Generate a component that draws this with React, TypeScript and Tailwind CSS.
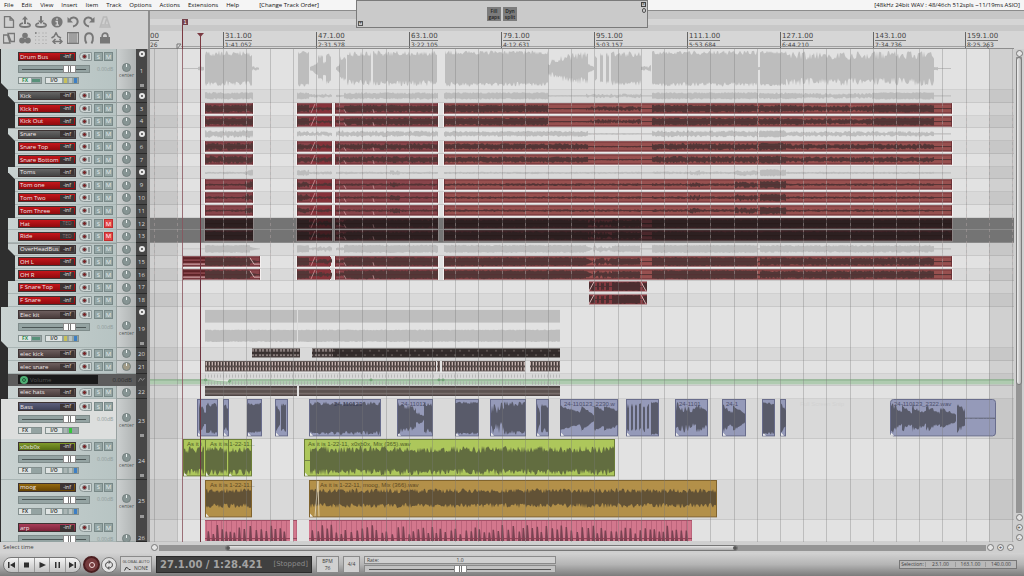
import type { ReactNode } from 'react';
import clsx from 'clsx';

type Seg = [x0: number, x1: number, a0: number, a1?: number, jitter?: number];
type Span = [x0: number, x1: number];

interface Track {
  id: number;
  name: string;
  tone: keyof typeof TONES;
  depth: 0 | 1 | 2;
  folder?: boolean;
  muted?: boolean;
  tall?: boolean;
  cropped?: boolean;
  envelope?: boolean;
  lane: () => ReactNode;
  labels?: { x: number; text: string; className: string }[];
}

// Horizontal extent of the arrange view, in timeline units
const START = 150;
const LENGTH = 864;
const percent = (x: number) => `${((x - START) / LENGTH) * 100}%`;

const TONES = {
  red: 'bg-linear-to-b from-[#c5161b] to-[#8f0a0e]',
  gray: 'bg-linear-to-b from-[#666] to-[#434343]',
  brown: 'bg-linear-to-b from-[#6d5e5e] to-[#493c3c]',
  blue: 'bg-linear-to-b from-[#5c5f7c] to-[#3f4258]',
  green: 'bg-linear-to-b from-[#7f9a2a] to-[#566d14]',
  amber: 'bg-linear-to-b from-[#94690f] to-[#674404]',
  pink: 'bg-linear-to-b from-[#a83c58] to-[#7b2339]',
};

function random(seed: number) {
  let s = seed * 7919 + 17;
  return () => {
    s = (s * 16807) % 2147483647;
    return s / 2147483647;
  };
}

function wave(segs: Seg[], mid: number, scale: number, seed = 1) {
  const rnd = random(seed);
  return segs
    .map(([x0, x1, a0, a1 = a0, jitter = 0.35]) => {
      const top: string[] = [];
      const bottom: string[] = [];
      for (let x = x0; x <= x1; x += 1) {
        const amp = (a0 + ((a1 - a0) * (x - x0)) / (x1 - x0)) * scale;
        const up = Math.max(0.4, amp * (1 - jitter * rnd()));
        const down = Math.max(0.4, amp * (1 - jitter * rnd()));
        top.push(`${x} ${(mid - up).toFixed(1)}`);
        bottom.unshift(`${x} ${(mid + down).toFixed(1)}`);
      }
      return `M${top.join('L')}L${bottom.join('L')}Z`;
    })
    .join('');
}

const DRUM_BUS: Seg[] = [
  [183, 201, 0.02], [198, 204, 0.12], [205, 252, 1], [252, 259, 0.2, 0.1, 0.8], [298, 309, 1, 1, 0.2],
  [310, 318, 0.1, 0.4], [318, 323, 0.8], [323, 326, 0.4], [326, 331, 0.95], [336, 340, 0.05, 0.3],
  [340, 346, 0.7], [347, 371, 0.95], [373, 437, 1], [445, 548, 1, 1, 0.25], [548, 556, 0.4, 0.7, 0.7],
  [556, 588, 0.7, 1, 0.5], [588, 594, 0.3, 0.1], [595, 597, 0.8], [600, 603, 0.9], [606, 609, 0.9],
  [611, 641, 0.95], [641, 651, 0.2, 0.2, 0.95], [652, 757, 1, 1, 0.25], [758, 760, 0.1], [760, 786, 1, 1, 0.2],
  [786, 934, 0.97, 0.97, 0.5], [934, 938, 0.1], [938, 951, 0.02],
];
const KICK: Seg[] = [
  [205, 253, 0.95, 0.95, 0.5], [297, 309, 0.9, 0.9, 0.4], [309, 332, 0.5, 0.5, 0.95], [336, 344, 0.4, 0.4, 0.8],
  [344, 438, 0.9, 0.9, 0.5], [444, 548, 0.9, 0.9, 0.4], [548, 586, 0.15], [586, 641, 0.6, 0.6, 0.95],
  [641, 652, 0.06], [652, 758, 0.9, 0.9, 0.4], [759, 802, 0.85, 0.85, 0.5], [802, 872, 0.75, 0.75, 0.7],
  [872, 934, 0.9, 0.9, 0.3], [934, 951, 0.08],
];
const SNARE: Seg[] = [
  [205, 253, 0.95, 0.95, 0.7], [297, 309, 0.75, 0.75, 0.7], [309, 332, 0.7, 0.7, 0.95], [336, 438, 0.8, 0.8, 0.7],
  [444, 588, 0.75, 0.75, 0.6], [588, 641, 0.2, 0.2, 0.8], [641, 652, 0.06], [652, 758, 0.85, 0.85, 0.65],
  [759, 786, 0.9, 0.9, 0.4], [786, 934, 0.7, 0.7, 0.75], [934, 951, 0.08],
];
const TOM: Seg[] = [
  [205, 245, 0.3, 0.3, 0.9], [245, 253, 0.9, 0.9, 0.8], [297, 309, 0.8, 0.8, 0.8], [309, 332, 0.3, 0.5, 0.9],
  [336, 390, 0.3, 0.3, 0.7], [390, 400, 0.7, 0.7, 0.8], [400, 438, 0.3, 0.3, 0.8], [444, 641, 0.3, 0.3, 0.8],
  [641, 652, 0.06], [652, 690, 0.35, 0.35, 0.8], [690, 700, 0.7, 0.7, 0.9], [700, 735, 0.35, 0.35, 0.8],
  [735, 758, 0.8, 0.8, 0.8], [760, 786, 0.9, 0.9, 0.4], [786, 934, 0.3, 0.3, 0.8], [934, 951, 0.08],
];
const HAT: Seg[] = [
  [205, 253, 0.95, 0.95, 0.2], [297, 309, 0.95, 0.95, 0.2], [309, 332, 0.5, 0.8, 0.9], [336, 346, 0.4, 0.9, 0.7],
  [346, 438, 0.95, 0.95, 0.3], [444, 588, 0.95, 0.95, 0.3], [588, 612, 0.9, 0.9, 0.95], [612, 641, 0.9],
  [641, 652, 0.15], [652, 951, 0.95, 0.95, 0.25],
];
const OVERHEAD: Seg[] = [
  [183, 205, 0.06], [205, 250, 1, 1, 0.25], [250, 260, 0.5, 0.06], [297, 309, 0.9, 0.9, 0.2],
  [309, 332, 0.4, 0.9, 0.9], [336, 344, 0.5, 0.5, 0.7], [344, 438, 1, 1, 0.3], [444, 586, 1, 1, 0.3],
  [586, 592, 0.9, 0.2], [593, 612, 0.9, 0.9, 0.95], [612, 640, 0.85, 0.85, 0.3], [640, 652, 0.08],
  [652, 757, 1, 1, 0.25], [757, 760, 0.2], [760, 934, 0.95, 0.95, 0.4], [934, 951, 0.1],
];

const TAKES: Span[] = [[205, 253], [297, 332], [335, 438], [444, 952]];

function Lane({ height, children }: { height: number; children: ReactNode }) {
  return (
    <svg
      className="absolute inset-0 block h-full w-full"
      viewBox={`${START} 0 ${LENGTH} ${height}`}
      preserveAspectRatio="none"
      aria-hidden="true"
    >
      {children}
    </svg>
  );
}

const busLane = (segs: Seg[], seed: number) => () => (
  <Lane height={13}>
    <path d="M205 6.5H253M297 6.5H332M336 6.5H438M444 6.5H951" stroke="#bdbdbd" strokeWidth="0.8" />
    <path d={wave(segs, 6.5, 4.6, seed)} fill="#bcbcbc" />
  </Lane>
);

const redLane = (segs: Seg[], seed: number, spans: Span[] = TAKES, dark = false) => () => (
  <Lane height={13}>
    {spans.map(([a, b]) => (
      <g key={a}>
        <rect x={a - 1} y="0" width={b - a + 2} height="13" fill={dark ? '#8b8585' : '#f4f0f0'} />
        <rect x={a} y="0.5" width={b - a} height="11" fill={dark ? '#4a272b' : a < 444 ? '#88444a' : '#97504f'} />
        <path
          d={`M${a} 1H${b}M${a} 11H${b}M${a + 0.5} 0.5V11.5M${b - 0.5} 0.5V11.5`}
          stroke={dark ? '#2f1c1f' : '#6e2f35'}
          strokeWidth="1"
        />
      </g>
    ))}
    {spans[1][0] === 297 && <rect x="310" y="1" width="21" height="10" fill={dark ? '#431d21' : '#86323a'} />}
    <path d={wave(segs, 6.2, 5, seed)} fill={dark ? '#2d2021' : '#533737'} />
    {spans.map(([a, b]) => (
      <path key={a} d={`M${a} 6.2H${b}`} stroke={dark ? '#2a1b1c' : '#553133'} strokeWidth="0.8" />
    ))}
    <path
      d="M311 11L313 6L315 1M344 7L346 11M373 7L374 11"
      stroke="#dfaeb0"
      strokeWidth="0.7"
      fill="none"
      opacity={dark ? 0.5 : 1}
    />
  </Lane>
);

const OH_TAKES: Span[] = [[183, 260], [297, 330], [335, 438], [444, 952]];
const overheadLane = (seed: number) => () => (
  <>
    {redLane(OVERHEAD, seed, OH_TAKES)()}
    <Lane height={13}>
      <path d="M183 2.5H205M183 6.5H205" stroke="#5e2327" strokeWidth="2" />
      <path d="M183 9H205M250 2L254 9H260" stroke="#ead0d0" strokeWidth="0.8" fill="none" />
    </Lane>
  </>
);

const FILL_HITS: Seg[] = [
  [589, 595, 0.9], [597, 599, 0.9], [601, 604, 0.9], [606, 609, 0.9], [612, 640, 0.95, 0.95, 0.2], [643, 647, 0.9],
];
const fillSnareLane = (seed: number) => () => (
  <Lane height={13}>
    <rect x="589" y="0.5" width="58" height="11" fill="#853a40" />
    <path d={wave(FILL_HITS, 6, 5.4, seed)} fill="#4c2e30" />
    <path d="M589 6H647" stroke="#4c2e30" />
    <path d="M589 11L594 1M641 1L646 11" stroke="#efc9ca" strokeWidth="0.9" />
  </Lane>
);

const bar = (spans: Span[], y: number, h: number, fill: string) =>
  spans.map(([a, b]) => <rect key={a} x={a} y={y} width={b - a} height={h} fill={fill} />);

const SNARE_HITS: Span[] = [[205, 436], [437, 440], [442, 525], [530, 560]];

interface AudioColors {
  fill: string;
  edge: string;
  ink: string;
}
const BLUE: AudioColors = { fill: '#959ab9', edge: '#686c8c', ink: '#595b6a' };
const LIME: AudioColors = { fill: '#adc75b', edge: '#6c7d38', ink: '#626d40' };
const GOLD: AudioColors = { fill: '#b39049', edge: '#80632d', ink: '#625236' };

function tallLane(spans: Span[], segs: Seg[], colors: AudioColors, mid: number, scale: number) {
  return () => (
    <Lane height={40}>
      {spans.map(([a, b]) => (
        <g key={a}>
          <rect x={a + 0.5} y="0.5" width={b - a - 1} height="37" rx={b > 990 ? 3 : 0} fill={colors.fill} stroke={colors.edge} />
          <path d={`M${a + 1} 34V37.5H${a + 4}Z`} fill="#eee" />
        </g>
      ))}
      <path d={wave(segs, mid, scale, spans.length + 3)} fill={colors.ink} />
    </Lane>
  );
}

const BASS_CLIPS: Span[] = [
  [197, 218], [223, 229], [247, 262], [275, 288], [309, 381], [397, 433], [455, 479], [490, 526],
  [536, 549], [560, 618], [626, 659], [675, 708], [722, 746], [762, 775], [780, 786], [890, 996],
];
const BASS_WAVE: Seg[] = [
  [199, 204, 1, 0.6], [204, 206, 0.4], [206, 217, 0.95], [224, 228, 0.9, 0.8, 0.4], [247, 261, 0.95, 0.95, 0.2], [276, 280, 0.9, 0.5],
  [281, 286, 0.9], [310, 380, 1, 1, 0.25], [398, 416, 1, 0.7, 0.4], [416, 424, 0.5, 0.2, 0.6], [424, 432, 0.95],
  [455, 478, 1, 1, 0.15], [491, 504, 1, 1, 0.8], [504, 525, 1, 1, 0.3], [537, 540, 1, 0.4], [541, 548, 0.9],
  [560, 580, 0.8, 0.4, 0.2], [580, 582, 0.4, 0.9], [582, 594, 0.8, 0.2, 0.2], [594, 604, 0.8, 0.5, 0.2],
  [604, 618, 0.8, 0.5, 0.2], [627, 629, 0.9], [631, 633, 0.9], [635, 637, 0.9], [639, 641, 0.9], [643, 645, 0.9],
  [647, 649, 0.9], [651, 658, 1, 1, 0.1], [676, 696, 1, 0.7, 0.6], [696, 707, 0.95, 0.6, 0.4], [723, 733, 0.9, 0.5, 0.5],
  [733, 745, 0.8, 0.3, 0.2], [763, 774, 1, 1, 0.2], [781, 786, 0.9, 0.5, 0.2], [891, 902, 1, 0.5, 0.4],
  [902, 912, 0.9, 0.4, 0.4], [912, 926, 1, 0.5, 0.5], [926, 940, 0.9, 0.4, 0.4], [940, 956, 0.7, 0.25, 0.3],
  [957, 965, 0.9, 0.6, 0.4], [965, 995, 0.03],
];

// Teeth standing on the lower edge of the arp clips
function teeth([a, b]: Span, seed: number) {
  const rnd = random(seed);
  let d = '';
  for (let x = a + 2; x < b - 3; x += 4 + Math.round(rnd() * 2)) {
    const h = 5 + rnd() * 10;
    d += `M${x} 22L${x + 0.6} ${(20 - h).toFixed(1)}L${x + 2} ${(20 - h).toFixed(1)}L${x + 3.2} 22Z`;
  }
  return d;
}
const ARP_CLIPS: Span[] = [[205, 290], [293, 297], [309, 692]];

const GROUPS: { className: string; tracks: Track[] }[] = [
  {
    className: 'h-[41px]',
    tracks: [
      {
        id: 1, name: 'Drum Bus', tone: 'red', depth: 0, folder: true, tall: true,
        lane: () => (
          <Lane height={41}>
            <path d={wave(DRUM_BUS, 20, 18.5, 4)} fill="#bdbdbd" />
          </Lane>
        ),
      },
    ],
  },
  {
    className: 'h-[217px]',
    tracks: [
      { id: 2, name: 'Kick', tone: 'gray', depth: 1, folder: true, lane: busLane(KICK, 2) },
      { id: 3, name: 'KIck in', tone: 'red', depth: 2, lane: redLane(KICK, 3) },
      { id: 4, name: 'Kick Out', tone: 'red', depth: 2, lane: redLane(KICK, 4) },
      { id: 5, name: 'Snare', tone: 'gray', depth: 1, folder: true, lane: busLane(SNARE, 5) },
      { id: 6, name: 'Snare Top', tone: 'red', depth: 2, lane: redLane(SNARE, 6) },
      { id: 7, name: 'Snare Bottom', tone: 'red', depth: 2, lane: redLane(SNARE, 7) },
      { id: 8, name: 'Toms', tone: 'gray', depth: 1, folder: true, lane: busLane(TOM, 8) },
      { id: 9, name: 'Tom one', tone: 'red', depth: 2, lane: redLane(TOM, 9) },
      { id: 10, name: 'Tom Two', tone: 'red', depth: 2, lane: redLane(TOM, 10) },
      { id: 11, name: 'Tom Three', tone: 'red', depth: 2, lane: redLane(TOM, 11) },
      { id: 12, name: 'Hat', tone: 'red', depth: 1, muted: true, lane: redLane(HAT, 12, TAKES, true) },
      { id: 13, name: 'Ride', tone: 'red', depth: 1, muted: true, lane: redLane(HAT, 13, TAKES, true) },
      { id: 14, name: 'OverHeadBus', tone: 'gray', depth: 1, folder: true, lane: busLane(OVERHEAD, 14) },
      { id: 15, name: 'OH L', tone: 'red', depth: 2, lane: overheadLane(15) },
      { id: 16, name: 'OH R', tone: 'red', depth: 2, lane: overheadLane(16) },
      { id: 17, name: 'F Snare Top', tone: 'red', depth: 1, lane: fillSnareLane(17) },
      { id: 18, name: 'F Snare', tone: 'red', depth: 1, lane: fillSnareLane(18) },
    ],
  },
  {
    className: 'h-[41px]',
    tracks: [
      {
        id: 19, name: 'Elec kit', tone: 'brown', depth: 0, folder: true, tall: true,
        lane: () => (
          <Lane height={41}>
            <rect x="205" y="3" width="355" height="13" fill="#bebebe" />
            <path d={wave([[205, 297, 1, 1, 0.15], [298, 560, 1, 1, 0.15]], 29.5, 6.5, 3)} fill="#bebebe" />
            <path d="M297.5 2V37" stroke="#dcdcdc" />
          </Lane>
        ),
      },
    ],
  },
  {
    className: 'h-[51px]',
    tracks: [
      {
        id: 20, name: 'elec kick', tone: 'brown', depth: 1,
        lane: () => (
          <Lane height={13}>
            <defs>
              <pattern id="kick-hits" width="7" height="10" patternUnits="userSpaceOnUse">
                <rect width="7" height="10" fill="#453c3b" />
                <path d="M1 1V4M1 7V9M4 1V4M4 7V9" stroke="#cdbfbd" />
              </pattern>
              <pattern id="kick-dense" width="9" height="10" patternUnits="userSpaceOnUse">
                <rect width="9" height="10" fill="#342d2c" />
                <path d="M1 2V4M5 7V9" stroke="#7b706e" />
              </pattern>
            </defs>
            {bar([[252, 300], [312, 333]], 0.5, 10, 'url(#kick-hits)')}
            {bar([[333, 560]], 0.5, 10, 'url(#kick-dense)')}
            <path d="M252 5.5H300M312 5.5H560" stroke="#2e2726" />
          </Lane>
        ),
      },
      {
        id: 21, name: 'elec snare', tone: 'brown', depth: 1,
        lane: () => (
          <Lane height={13}>
            <defs>
              <pattern id="snare-hits" width="3" height="13" patternUnits="userSpaceOnUse">
                <rect width="3" height="13" fill="#c3b1ae" />
                <rect width="1.6" height="13" fill="#453b3a" />
              </pattern>
            </defs>
            {bar(SNARE_HITS, 0.5, 10.5, 'url(#snare-hits)')}
            {bar(SNARE_HITS, 5, 2, '#5a4e4c')}
            {bar(SNARE_HITS, 0, 1, '#5d5150')}
            {bar(SNARE_HITS, 10.5, 1, '#5d5150')}
          </Lane>
        ),
      },
      {
        id: 0, name: 'Volume', tone: 'gray', depth: 1, envelope: true,
        lane: () => (
          <Lane height={13}>
            <defs>
              <pattern id="ghost-hits" width="3" height="13" patternUnits="userSpaceOnUse">
                <rect x="1" y="0" width="1" height="4" fill="#b9b9b9" />
                <rect x="1" y="8" width="1" height="4" fill="#a9b4a9" />
              </pattern>
            </defs>
            <rect x="150" y="6.5" width="864" height="5" fill="#afcbb0" />
            {bar(SNARE_HITS, 0.5, 12, 'url(#ghost-hits)')}
            <path d="M150 6.5H205L229 8.5V6.5H1014" stroke="#7aa57c" strokeWidth="1" fill="none" />
            <path d="M207 7L228 8.5L230 6.5Z" fill="#e6ece4" />
            <g fill="#7fb083" stroke="#5b8a60" strokeWidth="0.5">
              <circle cx="205.5" cy="6.5" r="1.2" />
              <circle cx="229.5" cy="8" r="1.2" />
              <circle cx="371" cy="6.5" r="1.2" />
              <circle cx="439" cy="6.5" r="1.2" />
              <circle cx="443" cy="6.5" r="1.2" />
            </g>
          </Lane>
        ),
      },
      {
        id: 22, name: 'elec hats', tone: 'brown', depth: 1,
        lane: () => (
          <Lane height={13}>
            {bar([[205, 297], [299, 560]], 0.5, 10.5, '#786d6b')}
            {bar([[205, 297], [299, 560]], 0, 2, '#4b4241')}
            {bar([[205, 297], [299, 560]], 4.5, 3, '#5c5250')}
            {bar([[205, 297], [299, 560]], 9.5, 1.5, '#4b4241')}
          </Lane>
        ),
      },
    ],
  },
  {
    className: 'h-[121px]',
    tracks: [
      {
        id: 23, name: 'Bass', tone: 'blue', depth: 0, tall: true,
        lane: tallLane(BASS_CLIPS, BASS_WAVE, BLUE, 19.5, 17),
        labels: [
          { x: 334, text: '24-110123', className: 'text-[#3b3e57]' },
          { x: 401, text: '24-11012', className: 'text-[#4c4f6b]' },
          { x: 564, text: '24-110123_2230.w', className: 'text-[#4c4f6b]' },
          { x: 679, text: '24-1101', className: 'text-[#4c4f6b]' },
          { x: 726, text: '24-1', className: 'text-[#4c4f6b]' },
          { x: 800, text: 'Full Screen Snip', className: 'text-[#d2d2d2]' },
          { x: 894, text: '24-110123_2322.wav', className: 'text-[#4c4f6b]' },
        ],
      },
      {
        id: 24, name: 'x0xb0x', tone: 'green', depth: 0, tall: true,
        lane: tallLane(
          [[183, 206], [205, 229], [228, 252], [304, 615]],
          [[184, 204, 1, 1, 0.5], [206, 227, 1, 1, 0.5], [229, 251, 1, 1, 0.5], [305, 310, 0.03], [310, 614, 1, 1, 0.48]],
          LIME, 22, 15,
        ),
        labels: [
          { x: 187, text: 'As it i', className: 'text-[#4f5d27]' },
          { x: 210, text: 'As it is 1-22-11...', className: 'text-[#4f5d27]' },
          { x: 308, text: 'As it is 1-22-11, x0xb0x, Mix (365).wav', className: 'text-[#4f5d27]' },
        ],
      },
      {
        id: 25, name: 'moog', tone: 'amber', depth: 0, tall: true,
        lane: () => (
          <>
            {tallLane([[205, 252], [309, 717]], [[206, 251, 1, 1, 0.5], [310, 716, 1, 1, 0.5]], GOLD, 18.5, 10)()}
            <Lane height={40}>
              <path d="M315 37L318 1L319 37" stroke="#e8dcc0" strokeWidth="0.8" fill="none" />
            </Lane>
          </>
        ),
        labels: [
          { x: 210, text: 'As it is 1-22-11...', className: 'text-[#5d4823]' },
          { x: 320, text: 'As it is 1-22-11, moog, Mix (366).wav', className: 'text-[#5d4823]' },
        ],
      },
    ],
  },
  {
    className: 'h-[22px] grow',
    tracks: [
      {
        id: 26, name: 'arp', tone: 'pink', depth: 0, tall: true, cropped: true,
        lane: () => (
          <Lane height={22}>
            <defs>
              <pattern id="arp-notes" width="5" height="22" patternUnits="userSpaceOnUse">
                <rect width="5" height="22" fill="#d3778d" />
                <rect x="1" width="1" height="22" fill="#bb647b" />
              </pattern>
            </defs>
            {bar(ARP_CLIPS, 0.5, 21.5, 'url(#arp-notes)')}
            {bar(ARP_CLIPS, 0, 1, '#a34c63')}
            {ARP_CLIPS.map((clip, i) => (
              <path key={i} d={teeth(clip, i + 5)} fill="#784352" />
            ))}
            {bar(ARP_CLIPS, 19, 1, '#8c4054')}
          </Lane>
        ),
      },
    ],
  },
];

const MENU = ['File', 'Edit', 'View', 'Insert', 'Item', 'Track', 'Options', 'Actions', 'Extensions', 'Help'];

const TRAY = 'M4 7.2C1.500 7.500 0.800 8.500 1 9.500C1.500 11.500 10.500 11.500 11 9.500C11.200 8.500 10.500 7.500 8 7.200';

const TOOLS: { label: string; faint?: boolean; art: ReactNode }[] = [
  { label: 'New project', art: <path d="M1.5 0.700H7L10.500 4.200V11.300H1.500ZM7 0.700V4.200H10.500" fill="none" /> },
  {
    label: 'Open project',
    art: (
      <>
        <path d={TRAY} fill="none" strokeWidth="1.800" />
        <path d="M6 0L9 3.500H7V8H5V3.500H3Z" stroke="none" />
      </>
    ),
  },
  {
    label: 'Save project',
    art: (
      <>
        <path d={TRAY} fill="none" strokeWidth="1.800" />
        <path d="M6 8L9 4.500H7V0H5V4.500H3Z" stroke="none" />
      </>
    ),
  },
  {
    label: 'Project settings',
    art: (
      <>
        <circle cx="6" cy="6" r="5.6" stroke="none" />
        <path d="M6 2.200V4M4.500 5.500H6.300V9.200M4.500 9.200H8" stroke="#d4d4d4" fill="none" />
      </>
    ),
  },
  {
    label: 'Undo',
    art: (
      <>
        <path d="M2.500 4C4.500 1 8 0.800 9.800 3C11.800 5.800 10 10 6 10.500" fill="none" strokeWidth="2" />
        <path d="M0.500 1V6.500H6Z" stroke="none" />
      </>
    ),
  },
  {
    label: 'Redo',
    art: (
      <>
        <path d="M9.500 4C7.500 1 4 0.800 2.200 3C0.200 5.800 2 10 6 10.500" fill="none" strokeWidth="2" />
        <path d="M11.500 1V6.500H6Z" stroke="none" />
      </>
    ),
  },
  { label: 'Metronome', faint: true, art: <path d="M4.500 1H7.500L10.800 11H1.200ZM2 9H10M6 8L7.500 3" fill="none" strokeWidth="1.500" /> },
  { label: 'Auto crossfade', art: <path d="M0.500 3H4.500L7 11H0.500ZM5 1.500H11.500V9.500H8Z" fill="none" /> },
  {
    label: 'Item grouping',
    art: (
      <g stroke="none">
        <circle cx="6" cy="3.5" r="2.8" />
        <circle cx="3.2" cy="8.4" r="3" />
        <circle cx="8.8" cy="8.4" r="3" />
      </g>
    ),
  },
  {
    label: 'Ripple editing',
    art: (
      <>
        <path d="M4 0.500V1.500M8 0.500V1.500M11 0.500V1.500M0.500 4V5M4 4V5M8 4V5M11 4V5M0.500 7.500V8.500M4 7.500V8.500M8 7.500V8.500M11 7.500V8.500M0.500 11V12M4 11V12M8 11V12M11 11V12" stroke="#aaa" />
        <circle cx="0.8" cy="1" r="0.9" stroke="none" />
      </>
    ),
  },
  {
    label: 'Move envelopes with items',
    art: <path d="M0.500 6L3 4.500L5 0.800L7 4.500L10 6M2 9.500H10.500M4.500 7L2 9.500L4.500 12M8.500 7L11 9.500L8.500 12" fill="none" strokeWidth="1.500" />,
  },
  { label: 'Grid lines', art: <path d="M0.600 0.600H11.400V11.400H0.600ZM3 1V11M5 1V11M7 1V11M9 1V11" fill="none" strokeWidth="1.100" /> },
  { label: 'Snapping', art: <path d="M3.500 11.500C1.500 8 1 1.200 6 1.200C11 1.200 10.500 8 8.500 11.500" fill="none" strokeWidth="1.900" /> },
  {
    label: 'Locking',
    art: (
      <>
        <rect x="1" y="5" width="10" height="6.5" stroke="none" />
        <path d="M3.200 5.500V4C3.200 0.200 8.800 0.200 8.800 4V5.500" fill="none" strokeWidth="1.700" />
      </>
    ),
  },
];

const RULER = [
  { x: 223, bar: '31.1.00', time: '1:41.052' },
  { x: 316, bar: '47.1.00', time: '2:31.578' },
  { x: 409, bar: '63.1.00', time: '3:22.105' },
  { x: 501, bar: '79.1.00', time: '4:12.631' },
  { x: 594, bar: '95.1.00', time: '5:03.157' },
  { x: 687, bar: '111.1.00', time: '5:53.684' },
  { x: 780, bar: '127.1.00', time: '6:44.210' },
  { x: 873, bar: '143.1.00', time: '7:34.736' },
  { x: 965, bar: '159.1.00', time: '8:25.263' },
];

const GRID = Array.from({ length: 38 }, (_, i) => Math.round(153.5 + i * 23.2));

function Knob({ warm }: { warm?: boolean }) {
  return (
    <span
      className={clsx(
        'flex h-[9px] w-[9px] shrink-0 justify-center rounded-full border border-[#74807f]',
        warm ? 'bg-[#a09a86]' : 'bg-[#869493]',
      )}
    >
      <span className="h-[3px] w-px bg-[#e9eeee]" />
    </span>
  );
}

const faderThumb =
  '[&::-webkit-slider-thumb]:h-[8px] [&::-webkit-slider-thumb]:w-[13px] [&::-webkit-slider-thumb]:appearance-none [&::-webkit-slider-thumb]:border [&::-webkit-slider-thumb]:border-[#8a8a8a] [&::-webkit-slider-thumb]:bg-[linear-gradient(90deg,#fff_4px,#777_4px,#777_5px,#fff_5px,#fff_6px,#777_6px,#777_7px,#fff_7px)]';

function TrackControls({ track }: { track: Track }) {
  return (
    <div className="flex items-center">
      <div className={clsx('flex h-[9px] w-[58px] items-center border border-[#3d3333] pr-px', TONES[track.tone])}>
        <input
          aria-label={`Name of track ${track.id}`}
          defaultValue={track.name}
          className="h-[7px] w-0 min-w-0 grow bg-transparent pl-px text-[6px] leading-none text-[#f1e9e9] outline-none"
        />
        <span
          className={clsx(
            'flex h-[6px] w-[14px] shrink-0 items-center justify-center bg-[#3c3434] text-[5px] leading-none',
            track.muted ? 'text-[#8b7777]' : 'text-[#eee]',
          )}
        >
          {track.muted ? 'TED' : '-inf'}
        </span>
      </div>
      <button
        aria-label={`Arm ${track.name} for recording`}
        className="ml-[3px] flex h-[9px] w-[13px] items-center rounded-l-full border border-[#8b9797] bg-[#cdd4d3] pl-[2px]"
      >
        <span className="h-[5px] w-[5px] rounded-full border border-[#8a9190] bg-[#7a2326]" />
        <span className="ml-px h-[5px] w-[2px] bg-[#8e9a9a]" />
      </button>
      <button
        aria-label={`Solo ${track.name}`}
        className="ml-[2px] flex h-[9px] w-[9px] items-center justify-center border border-[#788887] bg-[#94a5a4] text-[6px] leading-none text-[#e3eaea]"
      >
        S
      </button>
      <button
        aria-label={`Mute ${track.name}`}
        className={clsx(
          'ml-px flex h-[9px] w-[9px] items-center justify-center border text-[6px] leading-none',
          track.muted ? 'border-[#c22b2b] bg-[#e2474a] text-white' : 'border-[#788887] bg-[#94a5a4] text-[#e3eaea]',
        )}
      >
        M
      </button>
    </div>
  );
}

function TrackHead({ track }: { track: Track }) {
  const { depth, folder, tall, cropped, id, name } = track;
  const plain = id === 23;

  if (track.envelope) {
    return (
      <div className="flex min-h-0 bg-[#2e2e2e]">
        <div className="ml-2 flex grow items-center bg-[#5c5c5c] pl-[10px]">
          <span className="flex h-[9px] w-20 items-center gap-[2px] bg-[#1a1a1a] pl-[2px] text-[6px] leading-none text-[#565656]">
            <button aria-label="Toggle envelope" className="flex h-2 w-2 items-center justify-center rounded-full bg-[#4fae74]">
              <span className="h-1 w-1 rounded-full border border-[#1f5d38]" />
            </button>
            {name}
          </span>
          <span className="ml-auto pr-1 text-[6px] leading-none text-[#2f2f2f]">0.00dB</span>
        </div>
        <span className="flex w-[11px] shrink-0 items-center justify-center bg-[#444]">
          <svg className="h-[5px] w-[7px]" viewBox="0 0 7 5" fill="none" stroke="#888" aria-hidden="true">
            <path d="M0.500 4.500L2.500 1L4.500 3.500L6.500 1" />
          </svg>
        </span>
      </div>
    );
  }

  return (
    <div className={clsx('flex min-h-0 overflow-hidden bg-[#2e2e2e]', tall && !cropped && 'h-[41px]')}>
      <div
        className={clsx(
          'grow border-b border-[#a9b5b4]',
          depth === 0 && 'ml-px pl-[17px]',
          depth === 1 && 'ml-2 pl-[10px]',
          depth === 2 && 'ml-[15px] pl-[3px]',
          folder && '[clip-path:polygon(0_0,100%_0,100%_100%,7px_100%,0_calc(100%-7px))]',
          plain ? 'bg-[#dcdedd]' : 'bg-linear-to-r from-[#c9d2d1] to-[#b7c4c3]',
          tall ? 'flex flex-col gap-[4px] pt-[3px]' : 'flex items-center',
        )}
      >
        <TrackControls track={track} />
        {tall && (
          <div className={clsx('flex items-center', cropped && 'h-[6px]')}>
            <input
              type="range"
              aria-label={`${name} volume`}
              defaultValue={76}
              className={clsx(
                'h-[8px] w-[72px] appearance-none bg-[#94a3a2] bg-[linear-gradient(#4c5656,#4c5656)] bg-[length:64px_1px] bg-center bg-no-repeat ring-1 ring-[#7e8b8a] ring-inset',
                faderThumb,
              )}
            />
            <span className="ml-[7px] text-[5px] leading-none text-[#8f9b9a]">0.00dB</span>
          </div>
        )}
        {tall && !cropped && (
          <div className="flex h-[7px] items-center gap-[3px] text-[5px] leading-none font-bold text-[#444]">
            <span className="flex h-full w-[24px] border border-[#84908f] bg-[#94a3a2]">
              <button className={clsx('w-3 bg-[#dfe4e3]', folder && 'text-[#2c8a4a]')}>FX</button>
              {folder && <span className="m-px grow bg-[#58917a]" />}
            </span>
            <span className="flex h-full w-[34px] border border-[#84908f] bg-[#94a3a2]">
              <button className="w-4 bg-[#dfe4e3]">I/O</button>
              <span className={clsx('ml-[2px] w-[3px]', folder ? 'bg-[#c8c05a]' : 'bg-[#aab5b4]')} />
              <span className={clsx('ml-[2px] w-[3px]', plain ? 'bg-[#35c63c]' : 'bg-[#b9c2c1]')} />
              <span className={clsx('ml-[2px] w-[3px]', plain ? 'bg-[#94a3a2]' : 'bg-[#3c7ec4]')} />
            </span>
          </div>
        )}
      </div>
      <div
        className={clsx(
          'flex w-5 shrink-0 flex-col items-center border-b border-l border-[#98a1a0] bg-linear-to-r from-[#cbcfcf] to-[#aeb2b2]',
          tall ? 'pt-[14px]' : 'justify-center',
        )}
      >
        <Knob warm={id === 21} />
        {tall && !cropped && <span className="text-[5px] leading-[7px] text-[#4f5656]">center</span>}
      </div>
      <div
        className={clsx(
          'flex w-[11px] shrink-0 flex-col items-center border-b border-[#2a2a2a] bg-[#474747] text-[6px] leading-none text-[#dcdcdc]',
          cropped ? 'justify-end' : tall ? 'justify-between py-[2px]' : 'justify-center',
        )}
      >
        {folder && <span className="h-[6px] w-[6px] rounded-full border-2 border-[#e9e9e9] bg-[#474747]" />}
        {tall && !folder && !cropped && <span className="h-[6px]" />}
        {(tall || !folder) && <span>{id}</span>}
        {tall && !cropped && <span className="h-[3px] w-1 bg-[#9a9a9a]" />}
      </div>
    </div>
  );
}

function Toolbar() {
  return (
    <div className="grid h-[38px] grid-cols-[repeat(7,16px)] content-center gap-y-1 bg-[#d0d0d0] pl-px" role="toolbar" aria-label="Main toolbar">
      {TOOLS.map(({ label, faint, art }) => (
        <button key={label} aria-label={label} className={clsx('flex justify-center', faint && 'opacity-25')}>
          <svg className="h-3 w-3" viewBox="0 0 12 12" fill="#777" stroke="#777" strokeWidth="1.3">
            {art}
          </svg>
        </button>
      ))}
    </div>
  );
}

function Ruler() {
  return (
    <div className="relative h-[38px] overflow-hidden bg-[linear-gradient(#c6c6c6_8px,#d5d5d5_8px,#d5d5d5_14px,#c8c8c8_14px,#c8c8c8_20px,#d6d6d6_20px)] font-['DejaVu_Sans',sans-serif] text-[#444]">
      <div className="absolute inset-y-0 left-0 w-[calc(100%-10px)]">
        <div className="absolute top-[21px] left-0 text-[7px] leading-[8px]">
          <span className="block border-b border-[#777]">00</span>
          <span className="block text-[6px] leading-[7px]">26</span>
        </div>
        {RULER.map(({ x, bar: measure, time }) => (
          <div
            key={x}
            style={{ left: percent(x) }}
            className="absolute top-[21px] h-[17px] border-l border-[#666] pl-px text-[7px] leading-[8px] whitespace-nowrap"
          >
            <span className="block border-b border-[#777]">{measure}</span>
            <span className="block text-[6px] leading-[7px]">{time}</span>
          </div>
        ))}
        <svg className="absolute inset-0 h-full w-full" viewBox={`${START} 0 ${LENGTH} 38`} preserveAspectRatio="none" aria-hidden="true">
          <path d="M150 37.5H1014" stroke="#8d8d8d" />
          <path d="M177 38V33H181ZM989 38L985 33" stroke="#777" fill="#ddd" />
          <path d="M181 35.5H987" stroke="#8a8a8a" strokeWidth="0.7" />
          <path d="M182.5 11V38M200.5 24V38" stroke="#7b3a42" />
          <path d="M197 22H204L200.5 26Z" fill="#7b3a42" />
        </svg>
        <span style={{ left: percent(182) }} className="absolute top-2 flex h-[6px] w-[6px] items-center justify-center bg-[#74404a] text-[5px] leading-none text-white">
          1
        </span>
      </div>
    </div>
  );
}

function Timeline() {
  let row = 0;
  return (
    <div className="relative flex min-w-0 grow flex-col overflow-hidden bg-[#d0d0d0]">
      <div style={{ left: percent(177), width: `${(812 / LENGTH) * 100}%` }} className="absolute inset-y-0 bg-[#e2e2e2]" />
      {GROUPS.map((group, i) => (
        <div key={i} className={clsx('grid auto-rows-fr', group.className)}>
          {group.tracks.map((track) => {
            row += 1;
            return (
              <div
                key={track.id}
                className={clsx(
                  'relative min-h-0 border-b',
                  track.muted ? 'border-[#8a8a8a] bg-[#747474]' : 'border-black/8',
                  !track.muted && row % 2 === 0 && 'bg-black/4',
                )}
              >
                {track.lane()}
                {track.labels?.map(({ x, text, className }) => (
                  <span
                    key={x}
                    style={{ left: percent(x) }}
                    className={clsx(
                      "absolute top-px font-['Liberation_Sans',sans-serif] text-[6px] leading-[8px] whitespace-nowrap",
                      className,
                    )}
                  >
                    {text}
                  </span>
                ))}
              </div>
            );
          })}
        </div>
      ))}
      <svg
        className="pointer-events-none absolute inset-0 h-full w-full"
        viewBox={`${START} 0 ${LENGTH} 493`}
        preserveAspectRatio="none"
        aria-hidden="true"
      >
        <path d={GRID.map((x) => `M${x + 0.5} 0V493`).join('')} stroke="#777" strokeOpacity="0.35" />
        <path d={GRID.map((x) => `M${x + 0.5} 54V226`).join('')} stroke="#e9cfcf" strokeOpacity="0.25" strokeDasharray="3 3" />
        <path d="M182.5 0V493" stroke="#8a545c" strokeOpacity="0.8" />
        <path d="M200.5 0V493" stroke="#6e3540" />
      </svg>
    </div>
  );
}

function RoundButton({ label, children }: { label: string; children?: ReactNode }) {
  return (
    <button
      aria-label={label}
      className="flex h-[7px] w-[7px] shrink-0 items-center justify-center rounded-full border border-[#777] bg-[#e4e4e4] text-[6px] leading-none text-[#333]"
    >
      {children}
    </button>
  );
}

function VerticalScroll() {
  return (
    <div className="flex w-[10px] shrink-0 flex-col items-center bg-[#cfcfcf] pt-px pb-px">
      <RoundButton label="Scroll up" />
      <div className="flex w-[6px] grow flex-col bg-[#959595]">
        <div className="h-[72%] rounded-sm border border-[#7d7d7d] bg-linear-to-r from-[#efefef] to-[#b5b5b5]" />
      </div>
      <div className="flex flex-col gap-[3px] pt-px">
        <RoundButton label="Scroll down" />
        <RoundButton label="Zoom in vertically">+</RoundButton>
        <RoundButton label="Zoom out vertically">-</RoundButton>
      </div>
    </div>
  );
}

function HorizontalScroll() {
  return (
    <div className="flex h-[11px] grow items-center gap-px bg-[#cfcfcf] pr-[10px] pl-px">
      <RoundButton label="Scroll left" />
      <div className="flex h-[6px] grow bg-[#959595]">
        <div className="ml-[8%] flex w-[62%] items-center justify-between rounded-full border border-[#777] bg-linear-to-b from-[#e6e6e6] to-[#acacac]">
          <span className="h-1 w-1 rounded-full bg-[#555]" />
          <span className="h-1 w-1 rounded-full bg-[#555]" />
        </div>
      </div>
      <div className="flex gap-[3px]">
        <RoundButton label="Scroll right" />
        <RoundButton label="Zoom in">+</RoundButton>
        <RoundButton label="Zoom out">-</RoundButton>
      </div>
    </div>
  );
}

const TRANSPORT = [
  { label: 'Go to start', d: 'M2 2V8H3.500V2ZM9 2V8L4 5Z' },
  { label: 'Stop', d: 'M3 2.500H8V7.500H3Z' },
  { label: 'Play', d: 'M2.500 2L9 5L2.500 8Z' },
  { label: 'Pause', d: 'M3 2H4.500V8H3ZM6.500 2H8V8H6.500Z' },
  { label: 'Go to end', d: 'M2 2V8L7 5ZM7.500 2V8H9V2Z' },
];

function Transport() {
  return (
    <footer className="flex h-[23px] items-center bg-linear-to-b from-[#d2d2d2] via-[#b4b4b4] to-[#7c7c7c] pl-[3px] pr-[7px] text-[#3f3f3f]">
      <div className="flex h-4 w-[78px] divide-x divide-[#999] overflow-hidden rounded-full border border-[#777] bg-linear-to-b from-[#f4f4f4] to-[#c2c2c2]">
        {TRANSPORT.map(({ label, d }) => (
          <button key={label} aria-label={label} className="flex flex-1 items-center justify-center">
            <svg className="h-[10px] w-[11px]" viewBox="0 0 11 10" fill="#2f2f2f">
              <path d={d} />
            </svg>
          </button>
        ))}
      </div>
      <button aria-label="Record" className="ml-[2px] flex h-[17px] w-[17px] items-center justify-center rounded-full border-2 border-[#4b1e20] bg-[#753b3d]">
        <span className="h-[6px] w-[6px] rounded-full border border-[#f0dada]" />
      </button>
      <button aria-label="Toggle repeat" className="ml-px flex h-4 w-4 items-center justify-center rounded-full border border-[#777] bg-[#e2e2e2]">
        <svg className="h-[10px] w-[10px]" viewBox="0 0 10 10" fill="none" stroke="#333">
          <path d="M2.500 7.500C0.500 5 2 2 5 2H6M7.500 2.500C9.500 5 8 8 5 8H4M5 0.500L6.500 2L5 3.500M5 6.500L3.500 8L5 9.500" />
        </svg>
      </button>
      <button className="ml-[3px] flex h-[17px] w-8 flex-col items-center justify-center gap-[2px] border border-[#8a8a8a] bg-[#d0d0d0] text-[4px] leading-[5px] whitespace-nowrap">
        <span>GLOBAL AUTO</span>
        <span className="flex items-center gap-[3px] text-[5px]">
          <svg className="h-[5px] w-[7px]" viewBox="0 0 7 5" fill="none" stroke="#333">
            <path d="M0.500 4.500L2.500 1L5 3.500H6.500" />
          </svg>
          NONE
        </span>
      </button>
      <output className="ml-[4px] flex h-[17px] w-[156px] items-center justify-between border border-[#2c2c2c] bg-[#404040] px-[3px] font-['DejaVu_Sans',sans-serif] whitespace-nowrap text-[#a3a3a3]">
        <span className="text-[10px] leading-none font-bold">27.1.00 / 1:28.421</span>
        <span className="text-[7px] leading-none text-[#8b8b8b]">[Stopped]</span>
      </output>
      <label className="ml-1 flex h-[17px] w-[23px] flex-col items-center justify-center border border-[#8a8a8a] bg-[#d0d0d0] text-[5px] leading-[7px]">
        BPM
        <input defaultValue="76" className="h-[7px] w-full bg-transparent text-center outline-none" />
      </label>
      <button className="ml-1 h-[17px] w-[17px] border border-[#8a8a8a] bg-[#d0d0d0] text-[5px] leading-none">4/4</button>
      <div className="ml-1 flex w-[192px] flex-col gap-px text-[5px] leading-none">
        <div className="grid h-2 grid-cols-3 items-center border border-[#8a8a8a] bg-[#d0d0d0] px-[2px]">
          <label htmlFor="rate">Rate:</label>
          <span className="text-center">1.0</span>
        </div>
        <input
          id="rate"
          type="range"
          defaultValue={50}
          className={clsx(
            'h-2 w-full appearance-none bg-[#c2c2c2] bg-[linear-gradient(#555,#555)] bg-[length:182px_1px] bg-center bg-no-repeat ring-1 ring-[#8a8a8a] ring-inset',
            faderThumb,
          )}
        />
      </div>
      <div className="ml-auto grid h-[9px] w-[118px] grid-cols-[26px_1fr_1fr_1fr] items-center divide-x divide-[#999] border border-[#777] bg-[#b9b9b9] text-center text-[5px] leading-none whitespace-nowrap">
        <span>Selection:</span>
        <span>23.1.00</span>
        <span>163.1.00</span>
        <span>140.0.00</span>
      </div>
    </footer>
  );
}

export default function App() {
  return (
    <div className="relative flex min-h-screen flex-col overflow-hidden bg-[#cfcfcf] font-['Open_Sans',sans-serif]">
      <nav className="flex h-[11px] items-center gap-2 border-b border-[#8b8b8b] bg-[#f5f5f5] px-1 text-[6px] leading-none whitespace-nowrap text-[#111]">
        {MENU.map((item) => (
          <button key={item}>{item}</button>
        ))}
        <span className="pl-3">[Change Track Order]</span>
        <span className="ml-auto">[48kHz 24bit WAV : 48/46ch 512spls ~11/19ms ASIO]</span>
      </nav>

      <div className="flex grow">
        <aside className="flex w-[148px] shrink-0 flex-col">
          <Toolbar />
          <div className="flex grow flex-col border-r border-[#8b8b8b]">
            {GROUPS.map((group, i) => (
              <div key={i} className={clsx('grid auto-rows-fr overflow-hidden', group.className)}>
                {group.tracks.map((track) => (
                  <TrackHead key={track.id} track={track} />
                ))}
              </div>
            ))}
          </div>
        </aside>
        <div className="w-[2px] shrink-0 bg-[#8d8d8d]" />
        <main className="flex min-w-0 grow flex-col">
          <Ruler />
          <div className="flex grow">
            <Timeline />
            <VerticalScroll />
          </div>
        </main>
      </div>

      <div className="flex h-[11px] bg-[#d3d3d3]">
        <p className="w-[150px] shrink-0 pl-[3px] text-[6px] leading-[11px] text-[#444]">Select time</p>
        <HorizontalScroll />
      </div>
      <Transport />

      <section
        aria-label="Floating toolbar"
        className="absolute top-0 left-[356px] flex h-[28px] w-[292px] items-center justify-center gap-[2px] border border-[#7a7a7a] bg-[#cacaca]"
      >
        <button className="h-[14px] w-[14px] bg-[#7c7c7c] text-[5px] leading-[6px] font-semibold text-[#222]">Fill gaps</button>
        <button className="h-[14px] w-[14px] bg-[#7c7c7c] text-[5px] leading-[6px] font-semibold text-[#222]">Dyn split</button>
        <button aria-label="Close" className="absolute top-px right-px h-[5px] w-[5px] border border-[#444] text-[5px] leading-[3px] text-[#333]">×</button>
        <span className="absolute top-[7px] right-px h-[5px] w-[4px] rounded-full border border-[#555]" />
        <button aria-label="Dock" className="absolute bottom-px left-px h-[5px] w-[5px] border border-[#555] text-[5px] leading-[3px] text-[#333]">+</button>
      </section>
    </div>
  );
}
